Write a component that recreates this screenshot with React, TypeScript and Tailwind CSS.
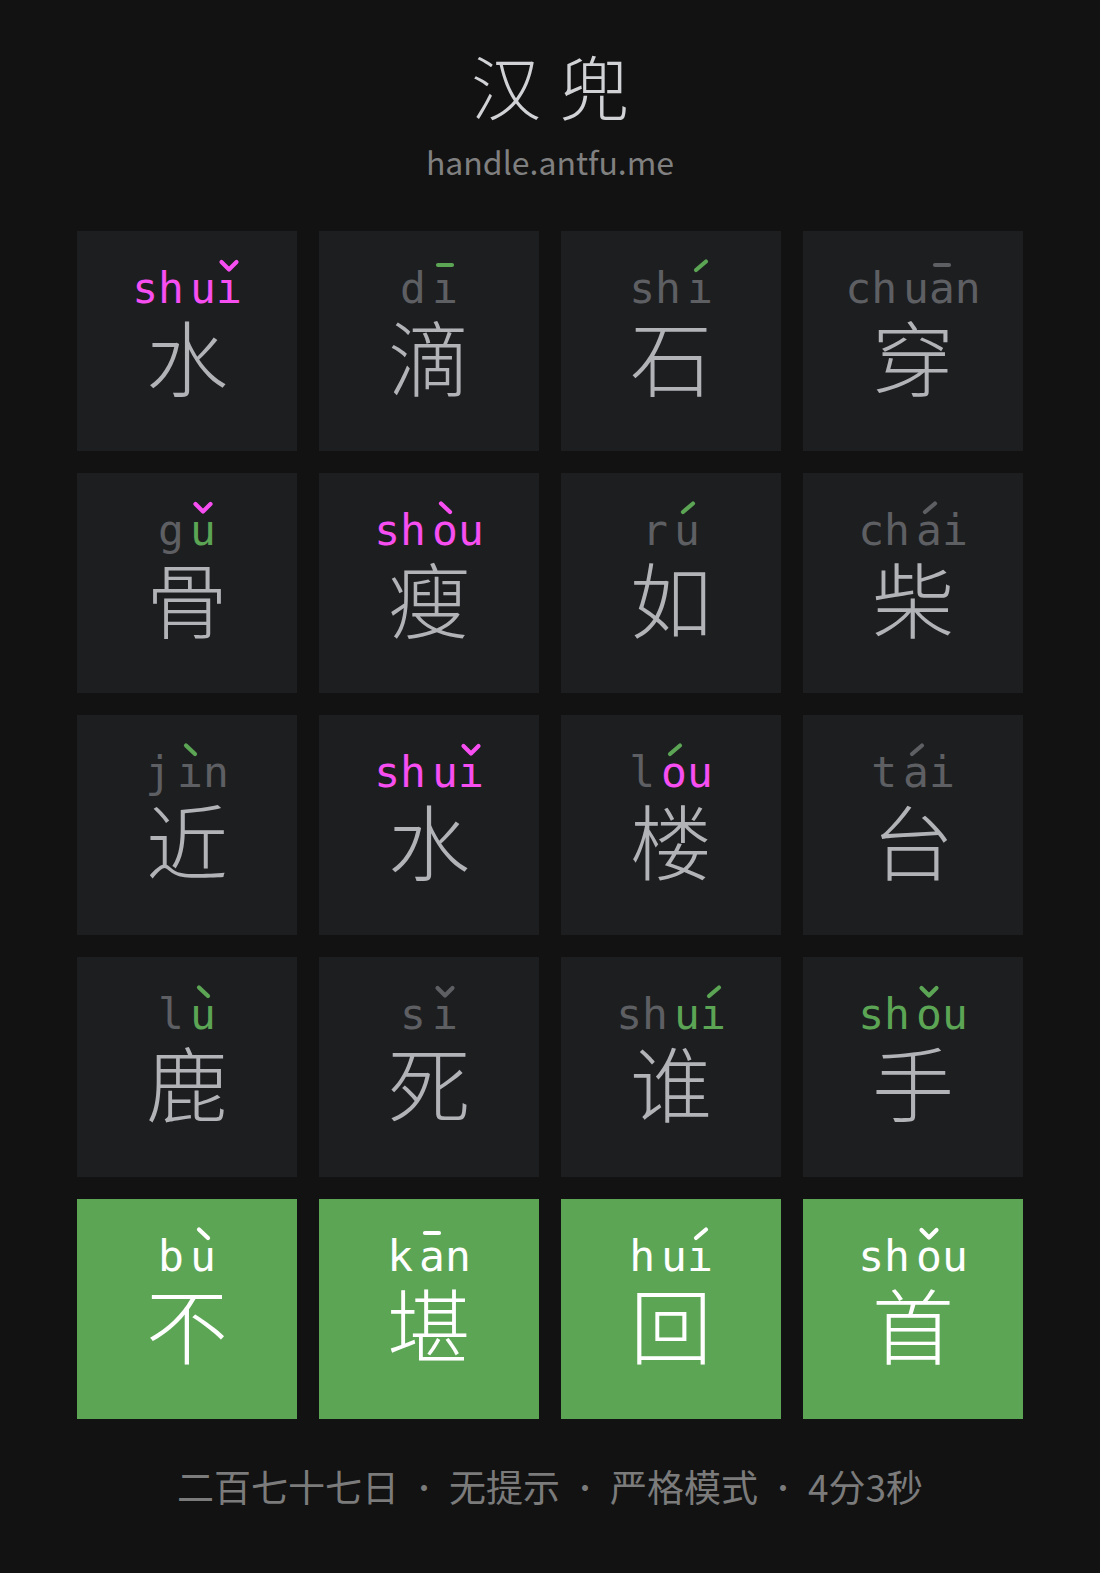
import React from "react";

type Tone = 1 | 2 | 3 | 4;

type Tile = {
  ch: string;
  ini: string;
  fin: string;
  ic: string;
  fc: string;
  tone: Tone;
  at: number;
  tc: string;
};

const PINK = "text-[#f64ef0]";
const GREEN = "text-[#5ba555]";
const GRAY = "text-[#5e5f63]";
const WHITE = "text-white";

const rows: Tile[][] = [
  [
    { ch: "水", ini: "sh", fin: "ui", ic: PINK, fc: PINK, tone: 3, at: 1, tc: PINK },
    { ch: "滴", ini: "d", fin: "i", ic: GRAY, fc: GRAY, tone: 1, at: 0, tc: GREEN },
    { ch: "石", ini: "sh", fin: "i", ic: GRAY, fc: GRAY, tone: 2, at: 0, tc: GREEN },
    { ch: "穿", ini: "ch", fin: "uan", ic: GRAY, fc: GRAY, tone: 1, at: 1, tc: GRAY },
  ],
  [
    { ch: "骨", ini: "g", fin: "u", ic: GRAY, fc: GREEN, tone: 3, at: 0, tc: PINK },
    { ch: "瘦", ini: "sh", fin: "ou", ic: PINK, fc: PINK, tone: 4, at: 0, tc: PINK },
    { ch: "如", ini: "r", fin: "u", ic: GRAY, fc: GRAY, tone: 2, at: 0, tc: GREEN },
    { ch: "柴", ini: "ch", fin: "ai", ic: GRAY, fc: GRAY, tone: 2, at: 0, tc: GRAY },
  ],
  [
    { ch: "近", ini: "j", fin: "in", ic: GRAY, fc: GRAY, tone: 4, at: 0, tc: GREEN },
    { ch: "水", ini: "sh", fin: "ui", ic: PINK, fc: PINK, tone: 3, at: 1, tc: PINK },
    { ch: "楼", ini: "l", fin: "ou", ic: GRAY, fc: PINK, tone: 2, at: 0, tc: GREEN },
    { ch: "台", ini: "t", fin: "ai", ic: GRAY, fc: GRAY, tone: 2, at: 0, tc: GRAY },
  ],
  [
    { ch: "鹿", ini: "l", fin: "u", ic: GRAY, fc: GREEN, tone: 4, at: 0, tc: GREEN },
    { ch: "死", ini: "s", fin: "i", ic: GRAY, fc: GRAY, tone: 3, at: 0, tc: GRAY },
    { ch: "谁", ini: "sh", fin: "ui", ic: GRAY, fc: GREEN, tone: 2, at: 1, tc: GREEN },
    { ch: "手", ini: "sh", fin: "ou", ic: GREEN, fc: GREEN, tone: 3, at: 0, tc: GREEN },
  ],
];

const answer: Tile[] = [
  { ch: "不", ini: "b", fin: "u", ic: WHITE, fc: WHITE, tone: 4, at: 0, tc: WHITE },
  { ch: "堪", ini: "k", fin: "an", ic: WHITE, fc: WHITE, tone: 1, at: 0, tc: WHITE },
  { ch: "回", ini: "h", fin: "ui", ic: WHITE, fc: WHITE, tone: 2, at: 1, tc: WHITE },
  { ch: "首", ini: "sh", fin: "ou", ic: WHITE, fc: WHITE, tone: 3, at: 0, tc: WHITE },
];

const Mark = ({ tone, cls }: { tone: Tone; cls: string }) => (
  <svg
    className={`absolute left-1/2 -translate-x-1/2 top-[-9px] ${cls}`}
    width="24"
    height="15"
    viewBox="0 0 24 15"
    fill="none"
    stroke="currentColor"
    strokeWidth="4.2"
    strokeLinecap="round"
    strokeLinejoin="round"
  >
    {tone === 1 && <path d="M5 7h14" />}
    {tone === 2 && <path d="M8 12L18 3.5" />}
    {tone === 3 && <path d="M4.5 4l7.5 7.5l7.5-7.5" />}
    {tone === 4 && <path d="M8 3.5l9 8.5" />}
  </svg>
);

const Pinyin = ({ t }: { t: Tile }) => (
  <div className="flex gap-[6px] h-[43px] leading-[43px] text-[43px] font-['DejaVu_Sans_Mono',monospace]">
    <span className={t.ic}>{t.ini}</span>
    <span className={`flex ${t.fc}`}>
      {t.fin.split("").map((l, i) =>
        i === t.at ? (
          <span key={i} className="relative">
            {l === "i" ? "ı" : l}
            <Mark tone={t.tone} cls={t.tc} />
          </span>
        ) : (
          <span key={i}>{l}</span>
        )
      )}
    </span>
  </div>
);

const Cell = ({ t, solved }: { t: Tile; solved?: boolean }) => (
  <div
    className={`h-[220px] flex flex-col items-center pt-[36px] ${
      solved ? "bg-[#5ca555]" : "bg-[#1d1e20]"
    }`}
  >
    <Pinyin t={t} />
    <div
      className={`mt-[4px] text-[82px] leading-none font-light ${
        solved ? "text-white" : "text-[#b1b3b7]"
      }`}
    >
      {t.ch}
    </div>
  </div>
);

export default function App() {
  return (
    <div className="min-h-screen bg-[#121212] font-['Noto_Sans_CJK_SC','Noto_Sans',sans-serif] flex flex-col items-center pb-[60px]">
      <h1 className="mt-[50px] flex gap-[18px] text-[70px] leading-none font-light text-[#d0d2d5]">
        <span>汉</span>
        <span>兜</span>
      </h1>
      <div className="mt-[25px] text-[32px] leading-none text-[#808080]">handle.antfu.me</div>

      <div className="mt-[54px] w-[946px] grid grid-cols-4 gap-[22px]">
        {rows.flat().map((t, i) => (
          <Cell key={i} t={t} />
        ))}
        {answer.map((t, i) => (
          <Cell key={`a${i}`} t={t} solved />
        ))}
      </div>

      <div className="mt-[49px] flex items-center text-[37px] leading-none text-[#7b7b7b]">
        <span>二百七十七日</span>
        <span className="mx-[11px] text-[28px]">·</span>
        <span>无提示</span>
        <span className="mx-[11px] text-[28px]">·</span>
        <span>严格模式</span>
        <span className="mx-[11px] text-[28px]">·</span>
        <span>4分3秒</span>
      </div>
    </div>
  );
}
